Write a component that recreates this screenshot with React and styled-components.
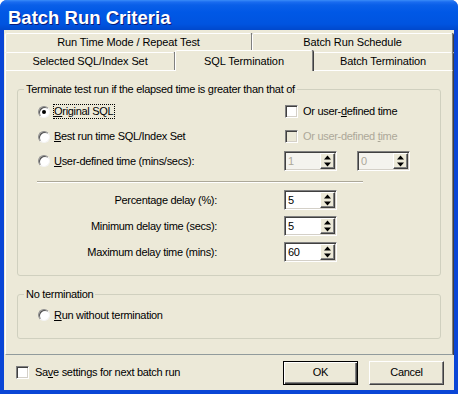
import React from 'react';
import styled, { createGlobalStyle, css } from 'styled-components';

const GlobalStyle = createGlobalStyle`
  html, body {
    margin: 0;
    padding: 0;
    background: #fff;
  }
  body {
    font-family: "Liberation Sans", Arial, sans-serif;
    font-size: 11px;
    line-height: 13px;
    letter-spacing: -0.3px;
    color: #000;
  }
`;

const Window = styled.div`
  width: 458px;
  height: 394px;
  display: flex;
  flex-direction: column;
  background: #0a46d6;
  border-radius: 7px 7px 0 0;
  overflow: hidden;
`;

const TitleBar = styled.div`
  height: 30px;
  flex: none;
  box-sizing: border-box;
  padding: 6px 0 0 8px;
  background: linear-gradient(
    #3a8cf8 0px,
    #1a6cf0 2px,
    #0a5fe8 5px,
    #0058e6 12px,
    #0054e0 24px,
    #0048cc 30px
  );
  color: #fff;
  font-family: "Liberation Sans", Arial, sans-serif;
  font-weight: bold;
  font-size: 18.5px;
  line-height: 24px;
  letter-spacing: 0;
  text-shadow: 1px 1px 0 #0a1a7a;
`;

const Client = styled.div`
  flex: 1;
  margin: 0 4px 4px;
  padding: 3px 1px 0;
  background: #ece9d8;
  display: flex;
  flex-direction: column;
`;

// tabs
const TabRow = styled.div`
  display: flex;
  height: ${p => p.$h}px;
  align-items: flex-start;
`;

const Tab = styled.div`
  width: ${p => p.$w}px;
  height: ${p => p.$h}px;
  flex: none;
  box-sizing: border-box;
  padding-top: 2px;
  text-align: center;
  white-space: nowrap;
  letter-spacing: -0.1px;
  border-top: 1px solid #fff;
  border-left: 1px solid #fff;
  border-right: 1px solid #808080;
  border-radius: 2px 2px 0 0;
  box-shadow: 1px 0 0 #404040;
  background: #ece9d8;
  ${p => p.$active && css`
    position: relative;
    z-index: 1;
    margin-top: -2px;
    height: 21px;
    padding-top: 4px;
  `}
`;

const Panel = styled.div`
  border-top: 1px solid #fff;
  border-left: 1px solid #fff;
  border-right: 1px solid #808080;
  border-bottom: 1px solid #919b9c;
  box-shadow: 1px 0 0 #404040;
  padding: 0 11px 15px;
  display: flex;
  flex-direction: column;
`;

// group boxes
const Group = styled.section`
  margin-top: 18px;
  padding-bottom: 13px;
  border: 1px solid #d0d0bf;
  border-radius: 3px;
`;

const GroupTitle = styled.div`
  display: table;
  margin: -7px 0 0 6px;
  padding: 0 2px;
  line-height: 13px;
  background: #ece9d8;
`;

const GroupBody = styled.div`
  padding: ${p => p.$pt}px 0 0 20px;
`;

const Row = styled.div`
  display: flex;
  align-items: center;
  height: ${p => p.$h}px;
  margin-top: ${p => p.$mt || 0}px;
`;

const FirstCell = styled.div`
  width: 246px;
  flex: none;
  box-sizing: border-box;
  display: flex;
  align-items: center;
  justify-content: ${p => (p.$right ? 'flex-end' : 'flex-start')};
  padding-right: ${p => (p.$right ? 67 : 0)}px;
`;

const Separator = styled.div`
  width: 326px;
  margin: 10px 0 0 -1px;
  border-top: 1px solid #aca899;
  border-bottom: 1px solid #fff;
`;

// controls
const Option = styled.label`
  display: flex;
  align-items: center;
  gap: ${p => p.$gap}px;
  margin-left: ${p => p.$ml || 0}px;
`;

const RadioCircle = styled.span`
  width: 12px;
  height: 12px;
  flex: none;
  box-sizing: border-box;
  border-radius: 50%;
  border: 1px solid;
  border-color: #8c8c8c #f4f4f4 #f4f4f4 #8c8c8c;
  box-shadow: inset 1px 1px 0 #505050;
  background: #fff;
  display: flex;
  align-items: center;
  justify-content: center;
  &::after {
    content: "";
    width: 4px;
    height: 4px;
    border-radius: 50%;
    background: ${p => (p.$checked ? '#000' : 'transparent')};
  }
`;

const CheckSquare = styled.span`
  width: 13px;
  height: 13px;
  flex: none;
  box-sizing: border-box;
  border: 1px solid;
  border-color: #808080 #fff #fff #808080;
  box-shadow: inset 1px 1px 0 #404040, inset -1px -1px 0 #d4d0c8;
  background: ${p => (p.$disabled ? '#ece9d8' : '#fff')};
`;

const Caption = styled.span`
  border: 1px dotted ${p => (p.$focus ? '#000' : 'transparent')};
  padding-right: 1px;
  white-space: nowrap;
  color: ${p => (p.$disabled ? '#aca899' : '#000')};
`;

const Label = styled.span`
  white-space: nowrap;
`;

const SpinFrame = styled.div`
  width: 53px;
  height: 20px;
  flex: none;
  box-sizing: border-box;
  display: flex;
  padding: 1px;
  margin-left: ${p => p.$ml || 0}px;
  border: 1px solid;
  border-color: #808080 #fff #fff #808080;
  box-shadow: inset 1px 1px 0 #404040, inset -1px -1px 0 #d4d0c8;
  background: ${p => (p.$disabled ? '#f4f3ee' : '#fff')};
`;

const SpinValue = styled.span`
  flex: 1;
  padding-left: 2px;
  line-height: 16px;
  color: ${p => (p.$disabled ? '#aca899' : '#000')};
`;

const SpinButton = styled.div`
  width: 15px;
  flex: none;
  box-sizing: border-box;
  display: flex;
  align-items: center;
  justify-content: center;
  background: #ece9d8;
  border: 1px solid;
  border-color: #fff #404040 #404040 #fff;
  box-shadow: inset -1px -1px 0 #808080;
`;

const BottomBar = styled.div`
  flex: 1;
  display: flex;
  align-items: center;
  padding: 0 9px 0 7px;
`;

const Buttons = styled.div`
  margin-left: auto;
  display: flex;
  gap: 11px;
`;

const Button = styled.button`
  width: 75px;
  height: 24px;
  padding: 0;
  font: inherit;
  letter-spacing: inherit;
  color: #000;
  background: #ece9d8;
  border: 1px solid;
  border-color: #fff #404040 #404040 #fff;
  box-shadow: inset -1px -1px 0 #808080;
  ${p => p.$default && css`
    border-color: #000;
    box-shadow: inset 1px 1px 0 #fff, inset -1px -1px 0 #404040, inset -2px -2px 0 #808080;
  `}
`;

const Arrows = () => (
  <svg width="7" height="12" viewBox="0 0 7 12">
    <polygon points="3.5,0.5 7,4.5 0,4.5" fill="#000" />
    <polygon points="0,7.5 7,7.5 3.5,11.5" fill="#000" />
  </svg>
);

const Spin = ({ value, disabled, ml }) => (
  <SpinFrame $disabled={disabled} $ml={ml}>
    <SpinValue $disabled={disabled}>{value}</SpinValue>
    <SpinButton>
      <Arrows />
    </SpinButton>
  </SpinFrame>
);

const RadioOption = ({ checked, focus, children }) => (
  <Option $gap={3}>
    <RadioCircle $checked={checked} />
    <Caption $focus={focus}>{children}</Caption>
  </Option>
);

const CheckOption = ({ disabled, gap = 4, ml = 1, children }) => (
  <Option $gap={gap} $ml={ml}>
    <CheckSquare $disabled={disabled} />
    <Caption $disabled={disabled}>{children}</Caption>
  </Option>
);

const delays = [
  { label: 'Percentage delay (%):', value: '5' },
  { label: 'Minimum delay time (secs):', value: '5' },
  { label: 'Maximum delay time (mins):', value: '60' },
];

const App = () => {
  return (
    <>
      <GlobalStyle />
      <Window>
        <TitleBar>Batch Run Criteria</TitleBar>
        <Client>
          <TabRow $h={19}>
            <Tab $w={247} $h={19}>Run Time Mode / Repeat Test</Tab>
            <Tab $w={201} $h={19}>Batch Run Schedule</Tab>
          </TabRow>
          <TabRow $h={18}>
            <Tab $w={170} $h={18}>Selected SQL/Index Set</Tab>
            <Tab $w={138} $h={18} $active>SQL Termination</Tab>
            <Tab $w={140} $h={18}>Batch Termination</Tab>
          </TabRow>
          <Panel>
            <Group>
              <GroupTitle>Terminate test run if the elapsed time is greater than that of</GroupTitle>
              <GroupBody $pt={5}>
                <Row $h={21}>
                  <FirstCell>
                    <RadioOption checked focus><u>O</u>riginal SQL</RadioOption>
                  </FirstCell>
                  <CheckOption>Or user-<u>d</u>efined time</CheckOption>
                </Row>
                <Row $h={21} $mt={4}>
                  <FirstCell>
                    <RadioOption><u>B</u>est run time SQL/Index Set</RadioOption>
                  </FirstCell>
                  <CheckOption disabled>Or user-defined <u>t</u>ime</CheckOption>
                </Row>
                <Row $h={20} $mt={4}>
                  <FirstCell>
                    <RadioOption><u>U</u>ser-defined time (mins/secs):</RadioOption>
                  </FirstCell>
                  <Spin value="1" disabled />
                  <Spin value="0" disabled ml={20} />
                </Row>
                <Separator />
                {delays.map((d, i) => (
                  <Row key={d.label} $h={20} $mt={i === 0 ? 7 : 6}>
                    <FirstCell $right>
                      <Label>{d.label}</Label>
                    </FirstCell>
                    <Spin value={d.value} />
                  </Row>
                ))}
              </GroupBody>
            </Group>
            <Group>
              <GroupTitle>No termination</GroupTitle>
              <GroupBody $pt={4}>
                <Row $h={20}>
                  <RadioOption><u>R</u>un without termination</RadioOption>
                </Row>
              </GroupBody>
            </Group>
          </Panel>
          <BottomBar>
            <CheckOption gap={5} ml={4}>Sa<u>v</u>e settings for next batch run</CheckOption>
            <Buttons>
              <Button $default>OK</Button>
              <Button>Cancel</Button>
            </Buttons>
          </BottomBar>
        </Client>
      </Window>
    </>
  );
};

export default App;
